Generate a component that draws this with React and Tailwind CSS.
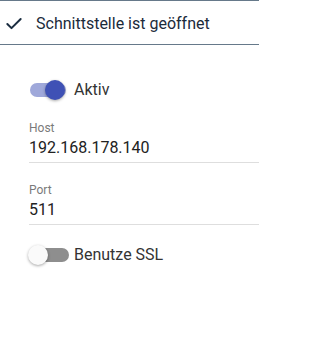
import { Check } from 'lucide-react';

function Toggle({ on }) {
  return (
    <div className="relative w-[40px] h-[20px] flex items-center">
      <div
        className={`w-[36px] h-[14px] rounded-full ${on ? 'bg-[#9fa8da]' : 'bg-[#8e8e8e]'} ${on ? 'ml-[1px]' : 'ml-[4px]'}`}
      />
      <div
        className={`absolute top-0 w-[20px] h-[20px] rounded-full shadow-[0_1px_3px_rgba(0,0,0,0.35)] ${
          on ? 'left-[16px] bg-[#3f51b5]' : 'left-[-1px] bg-[#fafafa]'
        }`}
      />
    </div>
  );
}

function Field({ label, value }) {
  return (
    <div className="border-b border-[#dedede] pb-[4px]">
      <div className="text-[12px] leading-[16px] text-[#7a7a7a]">{label}</div>
      <div className="mt-[2px] text-[16px] leading-[20px] text-[#222]">{value}</div>
    </div>
  );
}

export default function App() {
  return (
    <div
      className="w-[259px] h-[360px] bg-white"
      style={{ fontFamily: 'Roboto, "Liberation Sans", sans-serif' }}
    >
      <div className="h-[45px] pt-[3px] border-t border-b border-[#66798a] flex items-center">
        <Check className="ml-[4px] text-[#1b2d40]" size={20} strokeWidth={2.4} />
        <span className="ml-[12px] text-[16px] text-[#1b2b3b]">Schnittstelle ist geöffnet</span>
      </div>
      <div className="pl-[29px]">
        <div className="mt-[35px] flex items-center h-[20px]">
          <Toggle on />
          <span className="ml-[5px] text-[16px] text-[#333]">Aktiv</span>
        </div>
        <div className="mt-[20px]">
          <Field label="Host" value="192.168.178.140" />
        </div>
        <div className="mt-[19px]">
          <Field label="Port" value="511" />
        </div>
        <div className="mt-[20px] flex items-center h-[20px]">
          <Toggle />
          <span className="ml-[5px] text-[16px] text-[#333]">Benutze SSL</span>
        </div>
      </div>
    </div>
  );
}
